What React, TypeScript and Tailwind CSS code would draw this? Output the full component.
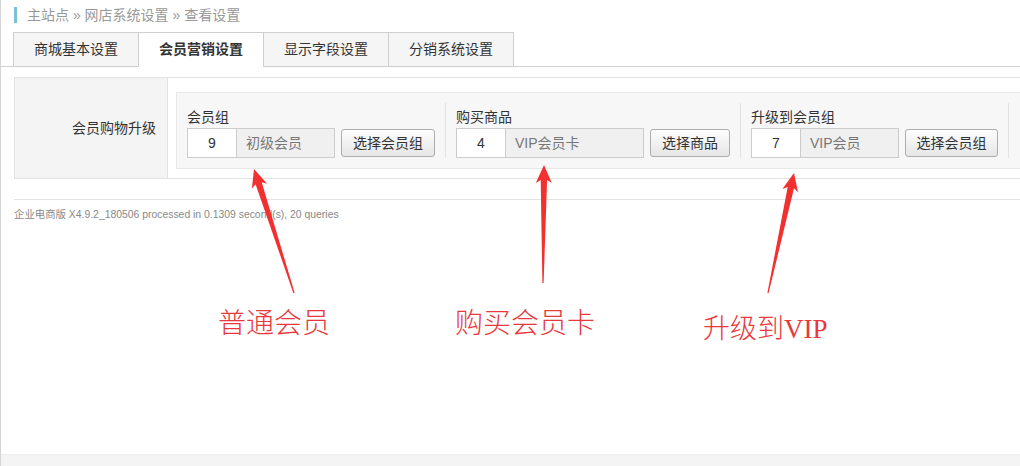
import React from "react";

type Pt = [number, number];

function arrowPoints(tail: Pt, tip: Pt, headLen = 18, headHalf = 8, shaftHalf = 3.2, tailHalf = 0.6): string {
  const dx = tip[0] - tail[0];
  const dy = tip[1] - tail[1];
  const len = Math.hypot(dx, dy);
  const ux = dx / len;
  const uy = dy / len;
  const nx = -uy;
  const ny = ux;
  const bx = tip[0] - ux * headLen;
  const by = tip[1] - uy * headLen;
  const nbx = tip[0] - ux * (headLen - 3);
  const nby = tip[1] - uy * (headLen - 3);
  const pts: Pt[] = [
    [tail[0] + nx * tailHalf, tail[1] + ny * tailHalf],
    [nbx + nx * shaftHalf, nby + ny * shaftHalf],
    [bx + nx * headHalf, by + ny * headHalf],
    [tip[0], tip[1]],
    [bx - nx * headHalf, by - ny * headHalf],
    [nbx - nx * shaftHalf, nby - ny * shaftHalf],
    [tail[0] - nx * tailHalf, tail[1] - ny * tailHalf],
  ];
  return pts.map((p) => `${p[0].toFixed(1)},${p[1].toFixed(1)}`).join(" ");
}

export default function App() {
  const ui = { fontFamily: "'Liberation Sans', 'Noto Sans CJK SC', sans-serif" };
  const note = { fontFamily: "'Liberation Serif', 'Noto Sans CJK SC', serif" };
  return (
    <div
      className="relative w-[1020px] h-[466px] overflow-hidden bg-white border-l border-[#d4d4d4] flex flex-col text-[#333]"
      style={ui}
    >
      {/* breadcrumb */}
      <div className="h-[32px] flex items-center pl-[13px] pb-[2px]">
        <div className="w-[3px] h-[16px] bg-[#7cc3d8]" />
        <div className="ml-[10px] text-[14px] leading-[16px] text-[#999]">
          主站点 » 网店系统设置 » 查看设置
        </div>
      </div>

      {/* tabs */}
      <div className="flex pl-[12px] border-b border-[#cfcfcf] h-[35px]">
        <div className="w-[126px] h-[35px] border border-[#cfcfcf] bg-[#f5f5f5] flex items-center justify-center text-[14px]">
          商城基本设置
        </div>
        <div className="-ml-px w-[126px] h-[35px] border border-[#cfcfcf] border-b-white bg-white flex items-center justify-center text-[14px] font-bold">
          会员营销设置
        </div>
        <div className="-ml-px w-[126px] h-[35px] border border-[#cfcfcf] bg-[#f5f5f5] flex items-center justify-center text-[14px]">
          显示字段设置
        </div>
        <div className="-ml-px w-[126px] h-[35px] border border-[#cfcfcf] bg-[#f5f5f5] flex items-center justify-center text-[14px]">
          分销系统设置
        </div>
      </div>

      {/* settings table */}
      <div className="mt-[10px] ml-[13px] flex border-t border-b border-l border-[#e3e3e3] h-[102px]">
        <div className="w-[153px] bg-[#f4f4f4] border-r border-[#e3e3e3] flex items-center justify-end pr-[11px] text-[14px]">
          会员购物升级
        </div>
        <div className="flex-1 pl-[8px] pt-[14px] overflow-hidden">
          <div className="flex h-[77px] w-[880px] border border-[#e8e8e8] bg-[#f7f7f7] py-[10px]">
            {[
              { label: "会员组", id: "9", name: "初级会员", fw: "w-[98px]", btn: "选择会员组", bw: "w-[94px]" },
              { label: "购买商品", id: "4", name: "VIP会员卡", fw: "w-[138px]", btn: "选择商品", bw: "w-[80px]" },
              { label: "升级到会员组", id: "7", name: "VIP会员", fw: "w-[98px]", btn: "选择会员组", bw: "w-[93px]" },
            ].map((c) => (
              <div key={c.label} className="px-[10px] border-r border-[#e3e3e3] pt-[4px]">
                <div className="h-[20px] leading-[20px] text-[14px] mb-px">{c.label}</div>
                <div className="flex h-[30px]">
                  <div className="w-[50px] h-[30px] border border-[#cccccc] bg-white flex items-center justify-center text-[14px]">
                    {c.id}
                  </div>
                  <div className={`${c.fw} h-[30px] border border-l-0 border-[#cccccc] bg-[#f0f0f0] flex items-center pl-[9px] text-[14px] text-[#777]`}>
                    {c.name}
                  </div>
                  <div className={`${c.bw} ml-[6px] mt-px h-[28px] rounded-[3px] border border-[#adadad] bg-gradient-to-b from-[#fdfdfd] to-[#e6e6e6] flex items-center justify-center text-[14px]`}>
                    {c.btn}
                  </div>
                </div>
              </div>
            ))}
          </div>
        </div>
      </div>

      {/* footer info */}
      <div className="mt-[20px] ml-[13px] border-t border-[#e3e3e3] pt-[8px] text-[10.4px] leading-[13px] text-[#888]">
        企业电商版 X4.9.2_180506 processed in 0.1309 second(s), 20 queries
      </div>

      <div className="flex-1" />
      <div className="h-[12px] bg-[#f4f4f4] border-t border-[#ececec]" />

      {/* annotations */}
      <svg className="absolute inset-0 pointer-events-none" width="1020" height="466">
        <polygon points={arrowPoints([293, 293], [253, 169])} fill="#f2302f" />
        <polygon points={arrowPoints([542, 283], [543, 165])} fill="#f2302f" />
        <polygon points={arrowPoints([767, 293], [793, 173])} fill="#f2302f" />
      </svg>
      <div className="absolute left-[217px] top-[310px] text-[28px] leading-[28px] text-[#e8383b] font-light" style={note}>
        普通会员
      </div>
      <div className="absolute left-[454px] top-[310px] text-[28px] leading-[28px] text-[#e8383b] font-light" style={note}>
        购买会员卡
      </div>
      <div className="absolute left-[702px] top-[316px] text-[27px] leading-[27px] text-[#e8383b] font-light" style={note}>
        升级到VIP
      </div>
    </div>
  );
}
